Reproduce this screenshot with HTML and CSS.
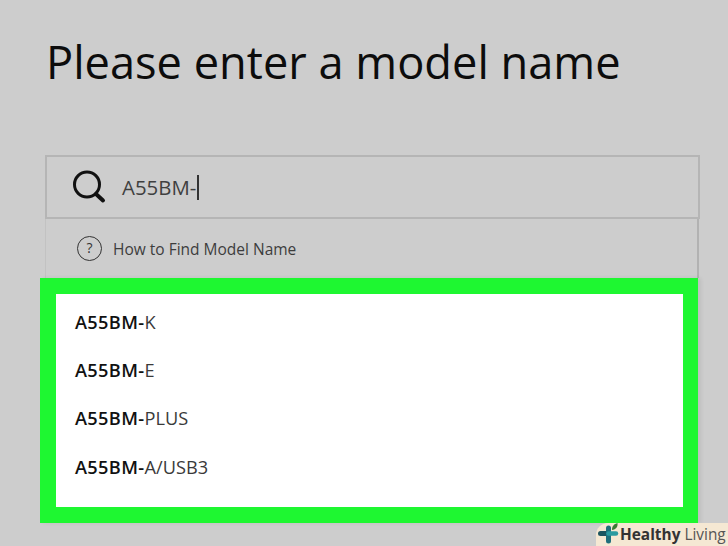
FILE: index.html
```html
<!DOCTYPE html>
<html>
<head lang="en">
    <meta charset="UTF-8">
    <title>Model name</title>
    <link rel="stylesheet" href="styles.css">
</head>
<body>
<div class="page">
    <h1 class="title">Please enter a model name</h1>
    <div class="search">
        <svg class="search-icon" width="36" height="36" viewBox="0 0 36 36">
            <circle cx="16" cy="15.5" r="12.5" fill="none" stroke="#111" stroke-width="3"/>
            <path d="M25 25l7 6.5" fill="none" stroke="#111" stroke-width="4" stroke-linecap="round"/>
        </svg>
        <span class="search-text">A55BM-</span><span class="caret"></span>
    </div>
    <div class="help">
        <span class="help-icon">?</span>
        <span class="help-text">How to Find Model Name</span>
    </div>
    <div class="highlight">
        <ul class="results">
            <li><b>A55BM-</b>K</li>
            <li><b>A55BM-</b>E</li>
            <li><b>A55BM-</b>PLUS</li>
            <li><b>A55BM-</b>A/USB3</li>
        </ul>
    </div>
</div>
<div class="badge">
    <svg class="badge-icon" width="22" height="24" viewBox="0 0 22 24">
        <path d="M3.5 12.5H11.5" fill="none" stroke="#1c5560" stroke-width="5" stroke-linecap="round"/>
        <path d="M11.5 7V20" fill="none" stroke="#1f6f7c" stroke-width="5" stroke-linecap="round"/>
        <path d="M11.5 12.5H19" fill="none" stroke="#2a9aa0" stroke-width="4.5" stroke-linecap="round"/>
        <path d="M15 9c0-4 2-6 5.500-7 .5 4-1.500 6.500-5.500 7z" fill="#3c7a35"/>
    </svg>
    <span class="badge-strong">Healthy</span><span class="badge-light">Living</span>
</div>
</body>
</html>
```
FILE: styles.css
```css
*{
    margin: 0;
    padding: 0;
    box-sizing: border-box;
}
ul{
    list-style: none;
}
html,body{
    width: 728px;
    height: 546px;
    overflow: hidden;
}
body{
    background: #cdcdcd;
    font-family: "Open Sans", "Noto Sans", sans-serif;
    position: relative;
}
.page{
    padding: 30px 28px 0 45px;
}
.title{
    font-size: 45.2px;
    font-weight: 400;
    line-height: 64px;
    color: #0c0c0c;
    padding-left: 1px;
    margin-bottom: 61px;
    white-space: nowrap;
}
.search{
    height: 64px;
    border: 2px solid #b5b5b5;
    display: flex;
    align-items: center;
    padding-left: 24px;
}
.search-icon{
    margin-right: 15px;
}
.search-text{
    font-size: 20.4px;
    color: #3f3f3f;
}
.caret{
    width: 2px;
    height: 25px;
    background: #333;
    margin-left: 1px;
}
.help{
    height: 59px;
    width: 654px;
    border-left: 1px solid #c2c2c2;
    border-right: 2px solid #b2b2b2;
    display: flex;
    align-items: center;
    padding-left: 31px;
}
.help-icon{
    width: 25px;
    height: 25px;
    border: 1.5px solid #333;
    border-radius: 50%;
    font-size: 14px;
    line-height: 21px;
    text-align: center;
    color: #333;
    margin-right: 11px;
}
.help-text{
    font-size: 15.5px;
    color: #3d3d3d;
}
.highlight{
    width: 658px;
    height: 245px;
    margin-left: -5px;
    background: #1ef731;
    padding: 16px 15px 16px 16px;
    box-shadow: 3px 0 4px rgba(0,0,0,.07);
}
.results{
    background: #fff;
    height: 213px;
    padding: 3.5px 19px;
}
.results li{
    height: 48.4px;
    line-height: 48px;
    font-size: 18.2px;
    color: #3a3a3a;
}
.results b{
    font-weight: 600;
    color: #111;
    letter-spacing: .35px;
}
.badge{
    position: absolute;
    right: 0;
    bottom: 0;
    width: 132px;
    height: 23px;
    background: #f5e8d3;
    border-top-left-radius: 12px;
    display: flex;
    align-items: center;
    font-size: 15.4px;
    white-space: nowrap;
}
.badge-icon{
    position: absolute;
    left: 1px;
    top: -2px;
}
.badge-strong{
    font-weight: 700;
    color: #333;
    margin-left: 24px;
    margin-right: 4px;
}
.badge-light{
    color: #555;
}
```
